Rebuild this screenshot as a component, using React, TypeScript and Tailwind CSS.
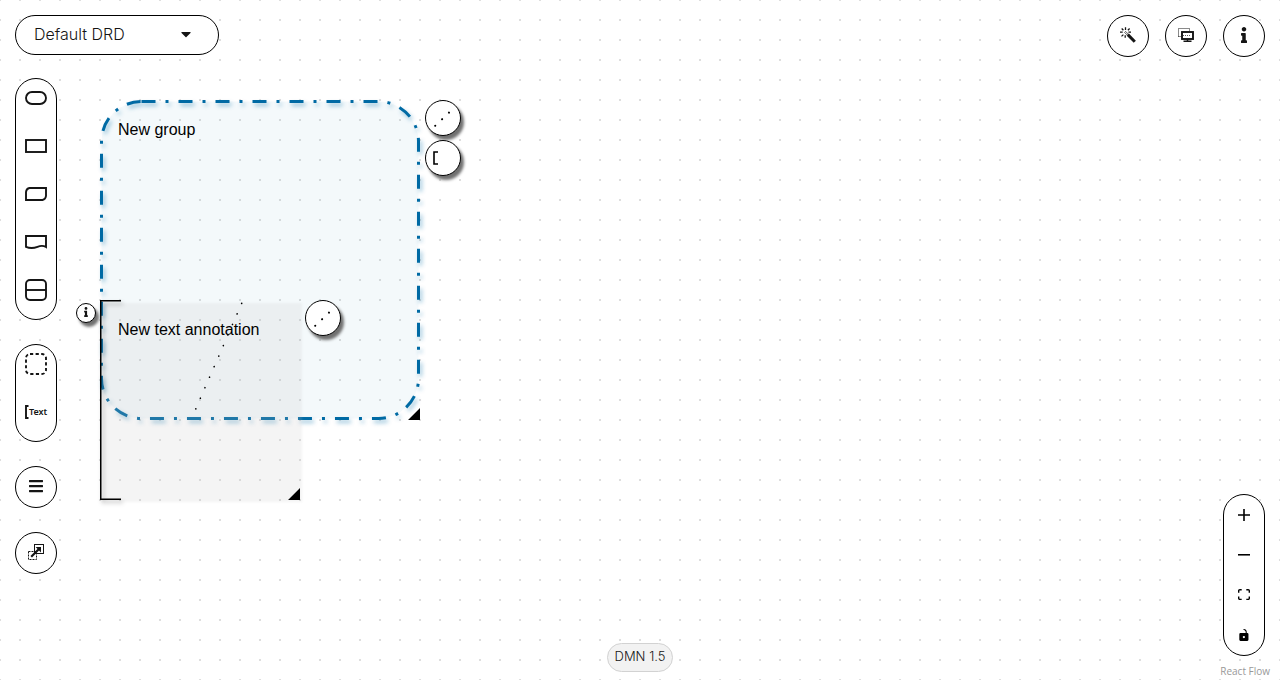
import React from "react";
import { FaBars, FaCaretDown, FaInfo } from "react-icons/fa";

const panel = "border border-black bg-white";
const roundButton =
  "flex size-[42px] items-center justify-center rounded-full border border-black bg-white pb-[2px] text-[#151515]";

type Tool = { label: string; icon: React.ReactNode };

function Shape({ children }: { children: React.ReactNode }) {
  return (
    <svg width="24" height="24" viewBox="0 0 24 24" fill="none" stroke="#151515" strokeWidth="1.9">
      {children}
    </svg>
  );
}

const nodeTools: Tool[] = [
  { label: "Input Data", icon: <Shape><rect x="2" y="6" width="20" height="12" rx="6" /></Shape> },
  { label: "Decision", icon: <Shape><rect x="2" y="6" width="20" height="12" /></Shape> },
  {
    label: "Business Knowledge Model",
    icon: <Shape><path d="M5.5 6H22V14Q21.6 17.4 18.5 18H2V10Q2.4 6.6 5.5 6Z" /></Shape>,
  },
  {
    label: "Knowledge Source",
    icon: <Shape><path d="M2 6H22V17C19 15.2 16.5 15.6 13.5 16.8C9.5 18.4 6 18.6 2 16.8Z" /></Shape>,
  },
  {
    label: "Decision Service",
    icon: <Shape><rect x="2" y="2" width="20" height="20" rx="4" /><path d="M2 12H22" /></Shape>,
  },
];

const artifactTools: Tool[] = [
  {
    label: "Group",
    icon: (
      <Shape>
        <rect x="2" y="2" width="20" height="20" rx="4" strokeDasharray="3.2 2.4" />
      </Shape>
    ),
  },
  {
    label: "Text Annotation",
    icon: (
      <Shape>
        <path d="M4.5 6H2V18H4.5" />
        <text x="5" y="15" fill="#151515" stroke="none" className="font-['Noto_Sans'] text-[9px] font-semibold">
          Text
        </text>
      </Shape>
    ),
  },
];

function Palette({ tools }: { tools: Tool[] }) {
  return (
    <div className={`flex w-[42px] flex-col rounded-full ${panel}`}>
      {tools.map((t) => (
        <button key={t.label} aria-label={t.label} className="mb-[10px] flex h-[38px] items-center justify-center">
          {t.icon}
        </button>
      ))}
    </div>
  );
}

function WandIcon() {
  return (
    <svg width="16" height="16" viewBox="0 0 16 16" fill="none" stroke="#151515">
      <path d="M4.6 5.4L5.6 4.4L8.4 7.2L7.4 8.2Z" strokeWidth="0.7" />
      <path d="M7.8 7.6L14.8 14.8" strokeWidth="3" />
      <path
        d="M5.5 0.3V3M1.7 1.5L3.4 3.2M9.6 1.5L7.9 3.2M0 5.2H2.7M8.4 5.2H11M1.5 9.4L3.4 7.6M5.2 8.2V10.8"
        strokeWidth="1.3"
      />
    </svg>
  );
}

function OverlaysIcon() {
  return (
    <svg width="16" height="16" viewBox="0 0 16 16" fill="none" stroke="#151515">
      <path d="M0.5 9.5V1.5H11.5V4" strokeDasharray="1 1" />
      <path d="M0.5 9.5H3" strokeDasharray="1 1" />
      <rect x="4" y="5" width="11" height="7" strokeWidth="1.9" />
      <path d="M5 8.5H13" strokeDasharray="1 1" strokeWidth="0.7" />
      <path d="M9.5 12V14M5.5 14.3H13.5" strokeWidth="1.5" />
    </svg>
  );
}

function ExternalNodesIcon() {
  return (
    <svg width="16" height="16" viewBox="0 0 16 16" fill="none" stroke="#151515">
      <rect x="0.5" y="7.5" width="8" height="8" strokeDasharray="2 1" />
      <rect x="6.5" y="0.5" width="9" height="9" />
      <path d="M3.2 12.8L11 5" strokeWidth="2.2" />
      <path d="M7.6 3H13V8.4Z" fill="#151515" stroke="none" />
    </svg>
  );
}

const zoomTools = [
  {
    label: "zoom in",
    box: "0 0 32 32",
    d: "M32 18.133H18.133V32h-4.266V18.133H0v-4.266h13.867V0h4.266v13.867H32z",
  },
  { label: "zoom out", box: "0 0 32 5", d: "M0 0h32v4.2H0z" },
  {
    label: "fit view",
    box: "0 0 32 30",
    d: "M3.692 4.63c0-.53.4-.938.939-.938h5.215V0H4.708C2.13 0 0 2.054 0 4.63v5.216h3.692V4.631zM27.354 0h-5.2v3.692h5.17c.53 0 .984.4.984.939v5.215H32V4.631A4.624 4.624 0 0027.354 0zm.954 24.83c0 .532-.4.94-.939.94h-5.215v3.768h5.215c2.577 0 4.631-2.13 4.631-4.707v-5.139h-3.692v5.139zm-23.677.94c-.531 0-.939-.4-.939-.94v-5.138H0v5.139c0 2.577 2.13 4.707 4.708 4.707h5.138V25.77H4.631z",
  },
  {
    label: "toggle interactivity",
    box: "0 0 25 32",
    d: "M21.333 10.667H19.81V7.619C19.81 3.429 16.38 0 12.19 0c-4.114 1.828-1.37 2.133.305 2.438 1.676.305 4.42 2.59 4.42 5.181v3.048H3.047A3.056 3.056 0 000 13.714v15.238A3.056 3.056 0 003.048 32h18.285a3.056 3.056 0 003.048-3.048V13.714a3.056 3.056 0 00-3.048-3.047zM12.19 24.533a3.056 3.056 0 01-3.047-3.047 3.056 3.056 0 013.047-3.048 3.056 3.056 0 013.048 3.048 3.056 3.056 0 01-3.048 3.047z",
  },
];

const handle =
  "flex size-9 items-center justify-center rounded-full border border-black bg-white shadow-[3px_4px_3px_#707070]";

function AssociationHandle() {
  return (
    <button aria-label="Add association" className={handle}>
      <svg width="34" height="34" viewBox="0 0 34 34">
        <path d="M9.2 24.8L23.4 11.2" stroke="black" strokeWidth="2" strokeLinecap="round" strokeDasharray="0.1 9.4" />
      </svg>
    </button>
  );
}

function Diagram() {
  return (
    <div className="absolute inset-0 overflow-hidden">
      <svg className="absolute inset-0 size-full">
        <defs>
          <pattern id="dots" x="-10" y="-10" width="20" height="20" patternUnits="userSpaceOnUse">
            <rect x="9" y="9" width="2" height="2" fill="#dedede" />
          </pattern>
          <filter id="shadow" x="-10%" y="-10%" width="120%" height="120%">
            <feDropShadow dx="2" dy="3" stdDeviation="2" floodColor="#006ba4" floodOpacity="0.4" />
          </filter>
          <filter id="bracketShadow" x="-50%" y="-10%" width="200%" height="120%">
            <feDropShadow dx="2" dy="3" stdDeviation="2" floodColor="black" floodOpacity="0.3" />
          </filter>
          <filter id="soft" x="-5%" y="-5%" width="110%" height="110%">
            <feGaussianBlur stdDeviation="1" />
          </filter>
        </defs>
        <rect width="100%" height="100%" fill="url(#dots)" />
        <rect x="101.5" y="101.5" width="317" height="317" rx="40" fill="#006ba4" fillOpacity="0.045" />
        <rect
          x="101.5"
          y="101.5"
          width="317"
          height="317"
          rx="40"
          fill="none"
          stroke="#006ba4"
          strokeWidth="3"
          strokeDasharray="14 10 3 10"
          filter="url(#shadow)"
        />
        <rect x="102" y="303" width="200" height="199" fill="#bcbcbc" fillOpacity="0.17" filter="url(#soft)" />
        <path d="M241.7 303.3L195.7 409" stroke="black" strokeWidth="1.6" strokeLinecap="round" strokeDasharray="0.1 11.4" />
        <path d="M121 300.75H100.75V499.25H121" fill="none" stroke="black" strokeWidth="1.5" filter="url(#bracketShadow)" />
        <path d="M420 408V420H408ZM300 488V500H288Z" fill="black" />
      </svg>

      <div className="absolute left-[118px] top-[118px] font-['Liberation_Sans',sans-serif] text-base text-black">
        New group
      </div>
      <div className="absolute left-[118px] top-[318px] font-['Liberation_Sans',sans-serif] text-base text-black">
        New text annotation
      </div>

      <div className="absolute left-[425px] top-[100px] flex flex-col gap-1">
        <AssociationHandle />
        <button aria-label="Add text annotation" className={handle}>
          <svg width="34" height="34" viewBox="0 0 34 34" fill="none" stroke="black" strokeWidth="1.6">
            <path d="M12 11H8V23H12" />
          </svg>
        </button>
      </div>
      <div className="absolute left-[305px] top-[300px]">
        <AssociationHandle />
      </div>
      <button
        aria-label="Annotation details"
        className="absolute left-[76px] top-[303px] flex size-5 items-center justify-center rounded-full border border-black bg-white pb-[2px] shadow-[3px_4px_3px_#707070]"
      >
        <FaInfo size={10} />
      </button>
    </div>
  );
}

export default function App() {
  return (
    <main className="relative h-screen min-h-[600px] overflow-hidden bg-white font-['Inter',sans-serif] text-[#151515]">
      <Diagram />

      <div className="pointer-events-none relative flex flex-col gap-[21px] p-[15px] *:pointer-events-auto">
        <header className="flex items-start justify-between">
          <button className={`flex h-10 w-[204px] items-center rounded-full pb-[2px] pl-[18px] pr-6 ${panel}`}>
            <span className="flex-1 text-left text-base font-light">Default DRD</span>
            <FaCaretDown size={16} />
          </button>
          <div className="flex gap-4">
            <button aria-label="Autolayout" className={roundButton}>
              <WandIcon />
            </button>
            <button aria-label="Overlays" className={roundButton}>
              <OverlaysIcon />
            </button>
            <button aria-label="Properties" className={roundButton}>
              <FaInfo size={16} />
            </button>
          </div>
        </header>
        <aside className="flex flex-col items-start gap-6">
          <Palette tools={nodeTools} />
          <Palette tools={artifactTools} />
          <button aria-label="DRG nodes" className={roundButton}>
            <FaBars size={16} />
          </button>
          <button aria-label="External nodes" className={roundButton}>
            <ExternalNodesIcon />
          </button>
        </aside>
      </div>

      <div className={`absolute bottom-6 right-[15px] flex w-[42px] flex-col rounded-full ${panel}`}>
        {zoomTools.map((t) => (
          <button key={t.label} aria-label={t.label} className="flex h-10 items-center justify-center">
            <svg viewBox={t.box} className="max-h-3 w-full max-w-3">
              <path d={t.d} />
            </svg>
          </button>
        ))}
      </div>

      <div className="absolute inset-x-0 bottom-2 flex justify-center">
        <span className="rounded-full border border-[#d2d2d2] bg-[#f2f2f2] px-[7px] pb-[5px] pt-[3px] text-[13px] leading-[19px] font-light">
          DMN 1.5
        </span>
      </div>
      <a
        href="https://reactflow.dev"
        className="absolute bottom-0 right-[10px] font-['Open_Sans',sans-serif] text-[10px] leading-[18px] text-[#999]"
      >
        React Flow
      </a>
    </main>
  );
}
